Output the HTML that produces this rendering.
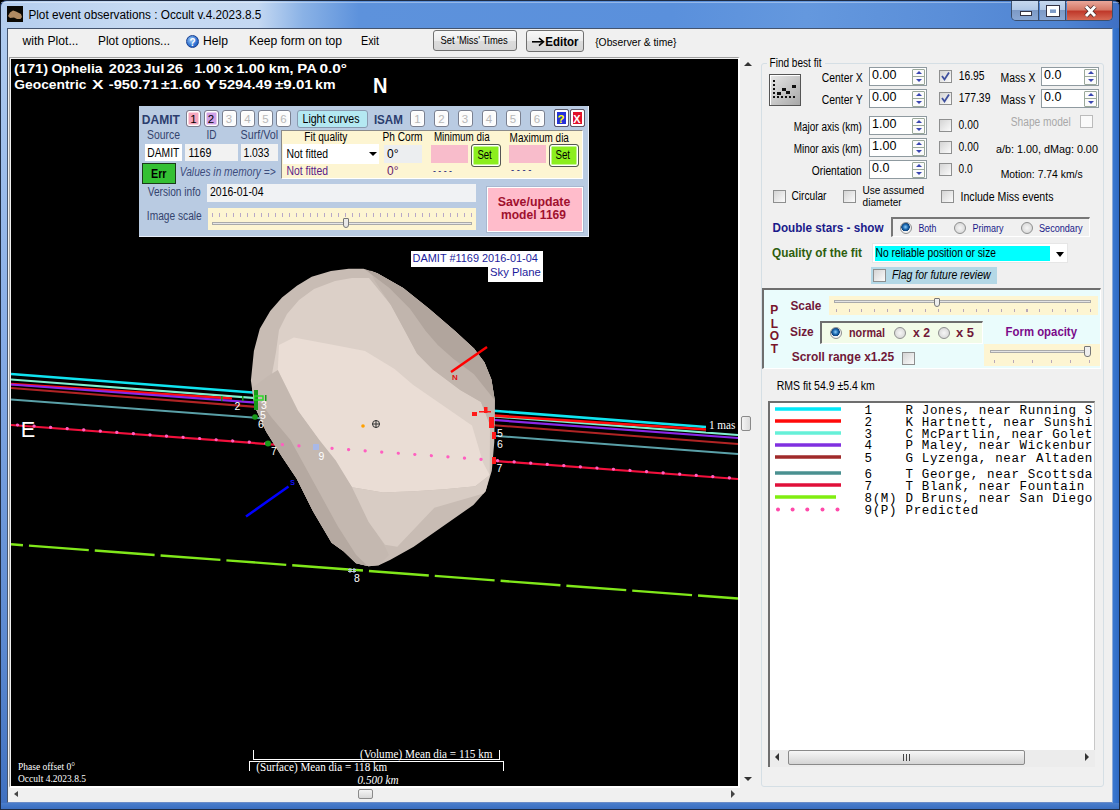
<!DOCTYPE html>
<html><head><meta charset="utf-8">
<style>
*{margin:0;padding:0;box-sizing:border-box}
html,body{width:1120px;height:810px;overflow:hidden;background:#000}
body{font-family:"Liberation Sans",sans-serif;font-size:12px;color:#000;position:relative}
.a{position:absolute;white-space:nowrap}
</style></head><body>
<div class="a" style="left:0;top:0;width:1120px;height:810px;border-radius:6px 6px 0 0;background:#3a68bc;border:1px solid #1e2c44"></div>
<div class="a" style="left:1px;top:1px;width:1118px;height:27px;border-radius:6px 6px 0 0;background:linear-gradient(90deg,#b4cdee 0%,#c6daf2 12%,#c4d8f2 23%,#8ab2e6 27%,#5d92dc 32%,#5a90dc 60%,#6498de 72%,#5a8ed8 85%,#4f84d2 95%,#3f70c4 100%)"></div>
<div class="a" style="left:1px;top:2px;width:1118px;height:1px;background:rgba(255,255,255,0.35)"></div>
<div class="a" style="left:1px;top:28px;width:6px;height:781px;background:linear-gradient(180deg,#b0ccf0,#86ace6 40%,#5a88d0 80%,#3f70c0 100%)"></div>
<div class="a" style="left:1113px;top:28px;width:6px;height:781px;background:linear-gradient(90deg,#3a78d0,#2f6ac4)"></div>
<div class="a" style="left:1px;top:803px;width:1118px;height:6px;background:linear-gradient(#4a7ecc,#3a6ec0)"></div>
<div class="a" style="left:7px;top:28px;width:1106px;height:775px;background:#f0f0f0;border:1px solid #44546e;border-right-color:#8aa8d8;border-bottom-color:#6a8cc8"></div>
<div class="a" style="left:7px;top:6px;width:16px;height:16px;background:#0a0804"><svg width="16" height="16" style="position:absolute;left:0;top:0"><path d="M1,10 L3,6.5 L6,4.5 L9,5.5 L11,6.5 L14,8 L15,11 L13.5,13 L10,13 L7,11.5 L3,12 Z" fill="#b08a62"/></svg></div>
<div class="a" style="left:1011px;top:1px;width:102px;height:20px;border:1px solid #3b4f6e;border-top:none;border-radius:0 0 5px 5px;overflow:hidden">
 <div style="position:absolute;left:0;top:0;width:27px;height:19px;background:linear-gradient(#c6d8ee,#b1c8e6 45%,#7d9ac6 50%,#8aa8d4);border-right:1px solid #3b4f6e"></div>
 <div style="position:absolute;left:28px;top:0;width:26px;height:19px;background:linear-gradient(#c6d8ee,#b1c8e6 45%,#7d9ac6 50%,#8aa8d4);border-right:1px solid #3b4f6e"></div>
 <div style="position:absolute;left:55px;top:0;width:47px;height:19px;background:linear-gradient(#e9a79a,#d67a68 45%,#c0392b 55%,#d66a55)"></div>
 <div style="position:absolute;left:8px;top:10px;width:12px;height:5px;background:#fff;border:1px solid #334"></div>
 <div style="position:absolute;left:35px;top:5px;width:12px;height:10px;border:3px solid #fff;box-shadow:0 0 0 1px #334"></div>
</div>
<svg class="a" style="left:1080px;top:2px" width="22" height="18"><g stroke-linecap="butt"><path d="M6,4.5 L15,14 M15,4.5 L6,14" stroke="#4a2a2a" stroke-width="4.6"/><path d="M6,4.5 L15,14 M15,4.5 L6,14" stroke="#fff" stroke-width="3"/></g></svg>
<div class="a" style="left:186px;top:35px;width:13px;height:13px;border-radius:50%;background:radial-gradient(circle at 40% 35%,#a8d0f8,#2b6fd0 60%,#1a4fa8);border:1px solid #1a4090"></div>
<div class="a" style="left:433px;top:30px;width:84px;height:21px;border:1px solid #707070;border-radius:3px;background:linear-gradient(#f8f8f8,#ececec 50%,#dcdcdc 51%,#d6d6d6)"></div>
<div class="a" style="left:526px;top:30px;width:58px;height:22px;border:1px solid #707070;border-radius:3px;background:linear-gradient(#f8f8f8,#ececec 50%,#dcdcdc 51%,#d6d6d6)"></div>
<svg class="a" style="left:530px;top:35px" width="16" height="14"><path d="M2,6.8 L13,6.8" stroke="#000" stroke-width="1.6"/><path d="M9,3 L13.5,6.8 L9,10.6" fill="none" stroke="#000" stroke-width="1.6"/></svg>
<div class="a" style="left:9px;top:57px;width:731px;height:731px;border-top:1px solid #a0a0a0;border-left:1px solid #a0a0a0;border-bottom:2px solid #fff;border-right:2px solid #fff"></div>
<div class="a" style="left:11px;top:59px;width:727px;height:727px;background:#000"></div>
<svg class="a" style="left:0;top:0" width="1120" height="810" viewBox="0 0 1120 810">
<defs><clipPath id="pc"><rect x="11" y="59" width="727" height="727"/></clipPath></defs>
<g clip-path="url(#pc)">
<g fill="none">
 <line x1="11" y1="374" x2="706" y2="427" stroke="#10e4f0" stroke-width="2.6"/>
 <line x1="11" y1="379.5" x2="738" y2="435" stroke="#80f0d0" stroke-width="2.2"/>
 <line x1="11" y1="384" x2="232" y2="398.5" stroke="#ff0c0c" stroke-width="2.6"/><line x1="491" y1="415.4" x2="706" y2="429.5" stroke="#ff0c0c" stroke-width="2.6"/>
 <line x1="11" y1="384.5" x2="738" y2="438" stroke="#8a28e8" stroke-width="2.2"/>
 <line x1="11" y1="388" x2="738" y2="444" stroke="#b02424" stroke-width="2"/>
 <line x1="11" y1="399.5" x2="738" y2="454" stroke="#5aa0a8" stroke-width="2"/>
 <line x1="11" y1="425" x2="738" y2="479" stroke="#f2103c" stroke-width="2.2"/>
 <line x1="11" y1="544.3" x2="353" y2="569.8" stroke="#80e81a" stroke-width="2.4" stroke-dasharray="60 6" stroke-dashoffset="48"/><line x1="353" y1="569.8" x2="738" y2="598.5" stroke="#80e81a" stroke-width="2.4" stroke-dasharray="60 6" stroke-dashoffset="50"/>
</g>
<g stroke="none">
 <path fill="#c8bcb4" d="M348.7,268.7 L363.5,268.7 L377.3,273.2 L403.2,288 L429.1,308.7 L455,331 L474,348.4 L484.4,362.2 L491.4,379.5 L494.8,400.3 L494.3,442 L491.8,470.8 L485.6,491.3 L473.4,505 L454.8,518 L413.7,546.8 L390,560 L378.8,565.3 L368.6,566.3 L356,563.2 L343.5,551.2 L331.6,542.7 L313,511.3 L296.6,478.5 L282.5,457.4 L266.1,431.6 L254.4,405.8 L250.9,380.5 L253.9,350.9 L259.8,328.7 L270.2,310.9 L282,297.6 L296.9,285.7 L311.7,276.8 L330.9,270.9 Z"/>
 <path fill="#dcd0c8" d="M276,352 L279,330 L287,314 L299,300 L314,289 L335,281 L352,278 L369,278 L391,305 L405,331 L417,353.6 L432.6,369.2 L460.2,389.9 L481,402 L490,425 L489.7,475 L475,486 L413,491 L352,487 L319,440 L298,411 L270,385 Z"/>
 <path fill="#c1b5ad" d="M370.4,270.6 L377.3,273.2 L403.2,288 L429.1,308.7 L455,331 L474,348.4 L484.4,362.2 L491.4,379.5 L494.8,400.3 L494.5,425 L490,425 L481,402 L460.2,389.9 L432.6,369.2 L417,353.6 L405,331 L391,305.2 L373.8,279.3 Z"/>
 <path fill="#b1a59d" d="M365,269.5 L377.3,273.2 L403.2,288 L429.1,308.7 L455,331 L474,348.4 L484.4,362.2 L491.4,379.5 L494.8,400.3 L474,374.3 L453.3,358.8 L437.8,345 L425.7,331 L410,308.7 L389.4,288 Z"/>
 <path fill="#eaddd5" d="M279,345 L293.9,337.6 L333.9,345 L365,350.9 L394.6,369 L413,384.8 L472,425.6 L483,462.6 L489.7,475 L475.3,486.2 L444.5,489.3 L413.7,491.3 L383,492.4 L352,487.2 L335.7,460.5 L319.3,440 L298,410.7 L277.8,370 Z"/>
 <path fill="#c4b8b0" d="M254.4,405.8 L266.1,431.6 L282.5,457.4 L296.6,478.5 L313,511.3 L331.6,542.7 L343.5,551.2 L356,563.2 L368.6,566.3 L378.8,565.3 L389,555 L385,546.8 L372.7,526 L352,487.2 L335.7,460.5 L319.3,440 L298,410.7 L277.8,370 L268,376 L252,388 Z"/>
 <path fill="#b5a9a1" d="M254.4,405.8 L266.1,431.6 L282.5,457.4 L296.6,478.5 L313,511.3 L331.6,542.7 L343.5,551.2 L356,563.2 L368.6,566.3 L366.5,565 L356.2,555 L337.8,526.2 L290.5,440 L272,418 L260,402 Z"/>
 <path fill="#d8ccc4" d="M352,487.2 L383,492.4 L413.7,491.3 L444.5,489.3 L475.3,486.2 L489.7,475 L485.6,491.3 L483.6,493.4 L434.3,507.8 L397.3,546.8 L385,544.7 L368.6,522 Z"/>
</g>
<line x1="11" y1="424.5" x2="738" y2="478.5" stroke="#ff5ec0" stroke-width="3.2" stroke-linecap="round" stroke-dasharray="0.1 16.5" stroke-dashoffset="-6.5"/>
</g>
<g>
 <rect x="254" y="390" width="4" height="20" fill="#1a9a1a"/>
 <rect x="254.5" y="396" width="8.5" height="4" fill="none" stroke="#22dd22" stroke-width="1.4"/>
 <circle cx="255" cy="417" r="2.8" fill="#1a9a1a"/>
 <rect x="242" y="396" width="1.5" height="5" fill="#1a9a1a"/><rect x="221" y="396" width="1.5" height="5" fill="#1a9a1a"/>
 <rect x="265" y="395" width="1.5" height="6" fill="#1a9a1a"/>
 <circle cx="268" cy="443.5" r="3" fill="#1a9a1a"/>
 <rect x="484" y="407" width="3.5" height="6" fill="#ff1a1a"/><rect x="479" y="411" width="12" height="1.5" fill="#ff1a1a"/>
 <rect x="472" y="412" width="5" height="4" fill="#ff1a1a"/>
 <rect x="489" y="417" width="5" height="11" fill="#ff1a1a"/>
 <rect x="492" y="432" width="4" height="7" fill="#ff1a1a"/>
 <rect x="492" y="457" width="4" height="7" fill="#ff1a1a"/>
 <line x1="246" y1="516.5" x2="288.5" y2="486.5" stroke="#0000ff" stroke-width="2.5"/>
 <line x1="451" y1="372" x2="487" y2="347" stroke="#ff0000" stroke-width="2.5"/>
 <rect x="313" y="444" width="6" height="6" fill="#a8b8e8"/>
 <circle cx="376" cy="424" r="3.5" fill="none" stroke="#333" stroke-width="1"/>
 <line x1="372" y1="424" x2="380" y2="424" stroke="#333"/><line x1="376" y1="420" x2="376" y2="428" stroke="#333"/>
 <circle cx="363" cy="426" r="1.8" fill="#ffa000"/>
 <rect x="706" y="417" width="32" height="15" fill="#000"/>
 <g stroke="#b8c8e0" stroke-width="1"><line x1="350" y1="568" x2="350" y2="573"/><line x1="354" y1="568" x2="354" y2="573"/><line x1="348" y1="569.5" x2="356" y2="569.5"/><line x1="348" y1="571.5" x2="356" y2="571.5"/></g>
</g>
<g stroke="#fff" stroke-width="1">
 <line x1="253" y1="759.5" x2="500" y2="759.5"/><line x1="253.5" y1="750" x2="253.5" y2="760"/><line x1="499.5" y1="750" x2="499.5" y2="760"/>
 <line x1="249" y1="761.5" x2="504" y2="761.5"/><line x1="249.5" y1="761" x2="249.5" y2="771"/><line x1="503.5" y1="761" x2="503.5" y2="771"/>
</g>
</svg>
<div class="a" style="left:411px;top:251px;width:132px;height:16px;background:#fff"></div>
<div class="a" style="left:488px;top:266px;width:55px;height:16px;background:#fff"></div>
<div class="a" style="left:744px;top:62px;width:0px;height:0px;border-left:4px solid transparent;border-right:4px solid transparent;border-bottom:4px solid #333"></div>
<div class="a" style="left:744px;top:777px;width:0px;height:0px;border-left:4px solid transparent;border-right:4px solid transparent;border-top:4px solid #333"></div>
<div class="a" style="left:741px;top:416px;width:10px;height:15px;border:1px solid #8a8a8a;border-radius:2px;background:linear-gradient(90deg,#f4f4f4,#dcdcdc)"></div>
<div class="a" style="left:14px;top:790.5px;width:0px;height:0px;border-top:3.5px solid transparent;border-bottom:3.5px solid transparent;border-right:4px solid #444"></div>
<div class="a" style="left:731px;top:790px;width:0px;height:0px;border-top:4px solid transparent;border-bottom:4px solid transparent;border-left:4px solid #444"></div>
<div class="a" style="left:358px;top:789px;width:15px;height:10px;border:1px solid #8a8a8a;border-radius:2px;background:linear-gradient(#f4f4f4,#d8d8d8)"></div>
<div class="a" style="left:139px;top:106px;width:450px;height:131px;background:#b9cbe2;border-right:1px solid #e8eef8;border-bottom:1px solid #e8eef8"></div>
<div class="a" style="left:186px;top:109.5px;width:15px;height:17.5px;background:#f6a6bc;border:1px solid #7a8090;border-radius:3px;box-shadow:inset 0 0 0 1.5px #fff"></div>
<div class="a" style="left:203.5px;top:109.5px;width:15px;height:17.5px;background:#d0a0e6;border:1px solid #7a8090;border-radius:3px;box-shadow:inset 0 0 0 1.5px #fff"></div>
<div class="a" style="left:221.5px;top:109.5px;width:15px;height:17.5px;background:#fbfbfb;border:1px solid #7a8090;border-radius:3px;box-shadow:inset 0 0 0 1.5px #fff"></div>
<div class="a" style="left:240px;top:109.5px;width:15px;height:17.5px;background:#fbfbfb;border:1px solid #7a8090;border-radius:3px;box-shadow:inset 0 0 0 1.5px #fff"></div>
<div class="a" style="left:258px;top:109.5px;width:15px;height:17.5px;background:#fbfbfb;border:1px solid #7a8090;border-radius:3px;box-shadow:inset 0 0 0 1.5px #fff"></div>
<div class="a" style="left:276px;top:109.5px;width:15px;height:17.5px;background:#fbfbfb;border:1px solid #7a8090;border-radius:3px;box-shadow:inset 0 0 0 1.5px #fff"></div>
<div class="a" style="left:297px;top:110px;width:71px;height:18px;background:#b4e8f2;border:1px solid #8a9ab0;border-radius:3px"></div>
<div class="a" style="left:410px;top:109.5px;width:15px;height:17.5px;background:#fbfbfb;border:1px solid #7a8090;border-radius:3px;box-shadow:inset 0 0 0 1.5px #fff"></div>
<div class="a" style="left:434px;top:109.5px;width:15px;height:17.5px;background:#fbfbfb;border:1px solid #7a8090;border-radius:3px;box-shadow:inset 0 0 0 1.5px #fff"></div>
<div class="a" style="left:457.5px;top:109.5px;width:15px;height:17.5px;background:#fbfbfb;border:1px solid #7a8090;border-radius:3px;box-shadow:inset 0 0 0 1.5px #fff"></div>
<div class="a" style="left:481.5px;top:109.5px;width:15px;height:17.5px;background:#fbfbfb;border:1px solid #7a8090;border-radius:3px;box-shadow:inset 0 0 0 1.5px #fff"></div>
<div class="a" style="left:505.5px;top:109.5px;width:15px;height:17.5px;background:#fbfbfb;border:1px solid #7a8090;border-radius:3px;box-shadow:inset 0 0 0 1.5px #fff"></div>
<div class="a" style="left:529.5px;top:109.5px;width:15px;height:17.5px;background:#fbfbfb;border:1px solid #7a8090;border-radius:3px;box-shadow:inset 0 0 0 1.5px #fff"></div>
<div class="a" style="left:553.5px;top:108.5px;width:15px;height:18px;background:#2632d8;border:1px solid #5a5a6a;border-radius:2px;box-shadow:inset 0 0 0 2px #fff"></div>
<div class="a" style="left:569.5px;top:108.5px;width:15px;height:18px;background:#e0102a;border:1px solid #5a5a6a;border-radius:2px;box-shadow:inset 0 0 0 2px #fff"></div>
<div class="a" style="left:145px;top:144px;width:37px;height:17px;background:#fff"></div>
<div class="a" style="left:185px;top:144px;width:53px;height:17px;background:#f2f2f2"></div>
<div class="a" style="left:241px;top:144px;width:37px;height:17px;background:#f2f2f2"></div>
<div class="a" style="left:142px;top:163px;width:34px;height:21px;background:#34c034;border:1px solid #1a3a1a"></div>
<div class="a" style="left:281px;top:130px;width:302px;height:49px;background:#fdf5d2;border-left:1px solid #8a8a8a;border-top:1px solid #8a8a8a;border-right:1px solid #fff;border-bottom:1px solid #fff"></div>
<div class="a" style="left:283px;top:144px;width:96px;height:20px;background:#fff"></div>
<div class="a" style="left:369px;top:152px;width:0px;height:0px;border-left:4px solid transparent;border-right:4px solid transparent;border-top:4px solid #000"></div>
<div class="a" style="left:384px;top:145px;width:38px;height:18px;background:#eceef0"></div>
<div class="a" style="left:431px;top:145px;width:37px;height:18px;background:#f8bccb"></div>
<div class="a" style="left:471px;top:144px;width:30px;height:23px;background:#8cee1e;border:1px solid #555;border-radius:3px;box-shadow:inset 0 0 0 1.5px #fff"></div>
<div class="a" style="left:509px;top:145px;width:37px;height:18px;background:#f8bccb"></div>
<div class="a" style="left:549px;top:144px;width:30px;height:23px;background:#8cee1e;border:1px solid #555;border-radius:3px;box-shadow:inset 0 0 0 1.5px #fff"></div>
<div class="a" style="left:207px;top:184px;width:269px;height:18px;background:#f0f2f4"></div>
<div class="a" style="left:208px;top:208px;width:268px;height:22px;background:#fdf5d2"><div class="a" style="left:4px;top:5px;width:260px;height:4px;background:repeating-linear-gradient(90deg,#b8a8c8 0 1px,transparent 1px 7px)"></div><div class="a" style="left:4px;top:14px;width:260px;height:3px;border:1px solid #aaa;background:#e6e6e6"></div><div class="a" style="left:135px;top:10px;width:6px;height:10px;background:#e8e8e8;border:1px solid #777;border-radius:1px 1px 3px 3px"></div></div>
<div class="a" style="left:487px;top:187px;width:96px;height:45px;background:#ffbccb;border:1px solid #fff;box-shadow:0 0 0 1px #a8b8d0"></div>
<div class="a" style="left:761px;top:63px;width:343px;height:724px;border:1px solid #d5dfe5;border-radius:3px"></div>
<div class="a" style="left:767px;top:60px;width:58px;height:8px;background:#f0f0f0"></div>
<div class="a" style="left:769px;top:74px;width:32px;height:32px;border:1px solid #555;background:linear-gradient(135deg,#e8e8e8,#a8a8a8);box-shadow:inset 1px 1px 0 #fff">
 <svg width="30" height="30" style="position:absolute;left:0;top:0"><g fill="#111"><rect x="3" y="5" width="2" height="2"/><rect x="3" y="9" width="2" height="2"/><rect x="3" y="13" width="2" height="2"/><rect x="3" y="17" width="2" height="2"/><rect x="3" y="21" width="2" height="2"/>
 <rect x="7" y="21" width="2" height="2"/><rect x="11" y="21" width="2" height="2"/><rect x="15" y="21" width="2" height="2"/><rect x="19" y="21" width="2" height="2"/><rect x="23" y="21" width="2" height="2"/>
 <rect x="7" y="17" width="4" height="3"/><rect x="12" y="13" width="4" height="3"/><rect x="16" y="16" width="4" height="3"/><rect x="22" y="10" width="4" height="3"/></g></svg>
</div>
<div class="a" style="left:869px;top:67px;width:58px;height:19px;background:#fff;border:1px solid #8f9aa0"><i style="position:absolute;left:42px;top:1px;width:13px;height:16px;border:1px solid #9aa89a;border-radius:1px;background:#fbfbfb"></i><i style="position:absolute;left:43px;top:8px;width:11px;height:1px;background:#9aa89a"></i><i style="position:absolute;left:45.5px;top:3px;border-left:3px solid transparent;border-right:3px solid transparent;border-bottom:3px solid #3a46b0"></i><i style="position:absolute;left:45.5px;top:11px;border-left:3px solid transparent;border-right:3px solid transparent;border-top:3px solid #3a46b0"></i></div>
<div class="a" style="left:869px;top:89px;width:58px;height:19px;background:#fff;border:1px solid #8f9aa0"><i style="position:absolute;left:42px;top:1px;width:13px;height:16px;border:1px solid #9aa89a;border-radius:1px;background:#fbfbfb"></i><i style="position:absolute;left:43px;top:8px;width:11px;height:1px;background:#9aa89a"></i><i style="position:absolute;left:45.5px;top:3px;border-left:3px solid transparent;border-right:3px solid transparent;border-bottom:3px solid #3a46b0"></i><i style="position:absolute;left:45.5px;top:11px;border-left:3px solid transparent;border-right:3px solid transparent;border-top:3px solid #3a46b0"></i></div>
<div class="a" style="left:869px;top:116px;width:58px;height:19px;background:#fff;border:1px solid #8f9aa0"><i style="position:absolute;left:42px;top:1px;width:13px;height:16px;border:1px solid #9aa89a;border-radius:1px;background:#fbfbfb"></i><i style="position:absolute;left:43px;top:8px;width:11px;height:1px;background:#9aa89a"></i><i style="position:absolute;left:45.5px;top:3px;border-left:3px solid transparent;border-right:3px solid transparent;border-bottom:3px solid #3a46b0"></i><i style="position:absolute;left:45.5px;top:11px;border-left:3px solid transparent;border-right:3px solid transparent;border-top:3px solid #3a46b0"></i></div>
<div class="a" style="left:869px;top:138px;width:58px;height:19px;background:#fff;border:1px solid #8f9aa0"><i style="position:absolute;left:42px;top:1px;width:13px;height:16px;border:1px solid #9aa89a;border-radius:1px;background:#fbfbfb"></i><i style="position:absolute;left:43px;top:8px;width:11px;height:1px;background:#9aa89a"></i><i style="position:absolute;left:45.5px;top:3px;border-left:3px solid transparent;border-right:3px solid transparent;border-bottom:3px solid #3a46b0"></i><i style="position:absolute;left:45.5px;top:11px;border-left:3px solid transparent;border-right:3px solid transparent;border-top:3px solid #3a46b0"></i></div>
<div class="a" style="left:869px;top:160px;width:58px;height:19px;background:#fff;border:1px solid #8f9aa0"><i style="position:absolute;left:42px;top:1px;width:13px;height:16px;border:1px solid #9aa89a;border-radius:1px;background:#fbfbfb"></i><i style="position:absolute;left:43px;top:8px;width:11px;height:1px;background:#9aa89a"></i><i style="position:absolute;left:45.5px;top:3px;border-left:3px solid transparent;border-right:3px solid transparent;border-bottom:3px solid #3a46b0"></i><i style="position:absolute;left:45.5px;top:11px;border-left:3px solid transparent;border-right:3px solid transparent;border-top:3px solid #3a46b0"></i></div>
<div class="a" style="left:939px;top:70px;width:13px;height:13px;border:1px solid #8e8f8f;background:linear-gradient(135deg,#d4d4d4,#fbfbfb);"><svg width="11" height="11" style="position:absolute;left:0;top:0"><path d="M2,5 L4.5,8.5 L9,1.5" fill="none" stroke="#3e4f9e" stroke-width="1.8"/></svg></div>
<div class="a" style="left:939px;top:92px;width:13px;height:13px;border:1px solid #8e8f8f;background:linear-gradient(135deg,#d4d4d4,#fbfbfb);"><svg width="11" height="11" style="position:absolute;left:0;top:0"><path d="M2,5 L4.5,8.5 L9,1.5" fill="none" stroke="#3e4f9e" stroke-width="1.8"/></svg></div>
<div class="a" style="left:939px;top:119px;width:13px;height:13px;border:1px solid #8e8f8f;background:linear-gradient(135deg,#d4d4d4,#fbfbfb);"></div>
<div class="a" style="left:939px;top:141px;width:13px;height:13px;border:1px solid #8e8f8f;background:linear-gradient(135deg,#d4d4d4,#fbfbfb);"></div>
<div class="a" style="left:939px;top:163px;width:13px;height:13px;border:1px solid #8e8f8f;background:linear-gradient(135deg,#d4d4d4,#fbfbfb);"></div>
<div class="a" style="left:1041px;top:67px;width:58px;height:19px;background:#fff;border:1px solid #8f9aa0"><i style="position:absolute;left:42px;top:1px;width:13px;height:16px;border:1px solid #9aa89a;border-radius:1px;background:#fbfbfb"></i><i style="position:absolute;left:43px;top:8px;width:11px;height:1px;background:#9aa89a"></i><i style="position:absolute;left:45.5px;top:3px;border-left:3px solid transparent;border-right:3px solid transparent;border-bottom:3px solid #3a46b0"></i><i style="position:absolute;left:45.5px;top:11px;border-left:3px solid transparent;border-right:3px solid transparent;border-top:3px solid #3a46b0"></i></div>
<div class="a" style="left:1041px;top:89px;width:58px;height:19px;background:#fff;border:1px solid #8f9aa0"><i style="position:absolute;left:42px;top:1px;width:13px;height:16px;border:1px solid #9aa89a;border-radius:1px;background:#fbfbfb"></i><i style="position:absolute;left:43px;top:8px;width:11px;height:1px;background:#9aa89a"></i><i style="position:absolute;left:45.5px;top:3px;border-left:3px solid transparent;border-right:3px solid transparent;border-bottom:3px solid #3a46b0"></i><i style="position:absolute;left:45.5px;top:11px;border-left:3px solid transparent;border-right:3px solid transparent;border-top:3px solid #3a46b0"></i></div>
<div class="a" style="left:1080px;top:115px;width:13px;height:13px;border:1px solid #8e8f8f;background:linear-gradient(135deg,#d4d4d4,#fbfbfb);background:#fafafa;border-color:#bbb"></div>
<div class="a" style="left:773px;top:190px;width:13px;height:13px;border:1px solid #8e8f8f;background:linear-gradient(135deg,#d4d4d4,#fbfbfb);"></div>
<div class="a" style="left:843px;top:190px;width:13px;height:13px;border:1px solid #8e8f8f;background:linear-gradient(135deg,#d4d4d4,#fbfbfb);"></div>
<div class="a" style="left:941px;top:190px;width:13px;height:13px;border:1px solid #8e8f8f;background:linear-gradient(135deg,#d4d4d4,#fbfbfb);"></div>
<div class="a" style="left:891px;top:217px;width:199px;height:20px;border-left:2px solid #777;border-top:2px solid #777;border-right:1px solid #fff;border-bottom:1px solid #fff"></div>
<div class="a" style="left:899.5px;top:221.5px;width:12px;height:12px;border-radius:50%;border:1px solid #8e8f8f;background:radial-gradient(circle at 45% 40%,#8fd0ff 0,#1e6ab0 2.5px,#0b3f7a 4px,#f2f2f2 4.5px)"></div>
<div class="a" style="left:953.7px;top:222px;width:12px;height:12px;border-radius:50%;border:1px solid #8e8f8f;background:radial-gradient(#f6f6f6,#d0d0d0)"></div>
<div class="a" style="left:1021px;top:222px;width:12px;height:12px;border-radius:50%;border:1px solid #8e8f8f;background:radial-gradient(#f6f6f6,#d0d0d0)"></div>
<div class="a" style="left:872px;top:243px;width:196px;height:20px;background:#fff;border:1px solid #e6e6e6"><div style="position:absolute;left:2px;top:2px;width:175px;height:15px;background:#00ffff"></div><span style="position:absolute;right:3px;top:8px;border-left:4px solid transparent;border-right:4px solid transparent;border-top:5px solid #000"></span></div>
<div class="a" style="left:871px;top:267px;width:126px;height:17px;background:#b4d8e6"></div>
<div class="a" style="left:873px;top:269px;width:13px;height:13px;border:1px solid #8e8f8f;background:linear-gradient(135deg,#d4d4d4,#fbfbfb);"></div>
<div class="a" style="left:762px;top:288px;width:339px;height:81px;background:#eafcfc;border-left:2px solid #6e6e6e;border-top:2px solid #6e6e6e;border-right:1px solid #fff;border-bottom:1px solid #fff"></div>
<div class="a" style="left:829px;top:296px;width:269px;height:19px;background:#fdf5d2"><div class="a" style="left:5px;top:4px;width:257px;height:3px;border:1px solid #aaa;background:#e4e4e4"></div><div class="a" style="left:105px;top:2px;width:6px;height:9px;background:#eee;border:1px solid #777;border-radius:1px 1px 3px 3px"></div><div class="a" style="left:7px;top:13px;width:256px;height:3px;background:repeating-linear-gradient(90deg,#b8a8b8 0 1px,transparent 1px 12.7px)"></div></div>
<div class="a" style="left:820px;top:321px;width:163px;height:23px;background:#f2fbe8;border-left:2px solid #6e6e6e;border-top:2px solid #6e6e6e;border-right:1px solid #fff;border-bottom:1px solid #fff"></div>
<div class="a" style="left:830.2px;top:327px;width:12px;height:12px;border-radius:50%;border:1px solid #8e8f8f;background:radial-gradient(circle at 45% 40%,#8fd0ff 0,#1e6ab0 2.5px,#0b3f7a 4px,#f2f2f2 4.5px)"></div>
<div class="a" style="left:893.7px;top:327px;width:12px;height:12px;border-radius:50%;border:1px solid #8e8f8f;background:radial-gradient(#f6f6f6,#d0d0d0)"></div>
<div class="a" style="left:938px;top:327px;width:12px;height:12px;border-radius:50%;border:1px solid #8e8f8f;background:radial-gradient(#f6f6f6,#d0d0d0)"></div>
<div class="a" style="left:902px;top:352px;width:13px;height:13px;border:1px solid #8e8f8f;background:linear-gradient(135deg,#d4d4d4,#fbfbfb);"></div>
<div class="a" style="left:984px;top:344px;width:116px;height:22px;background:#fdf5d2"><div class="a" style="left:6px;top:6px;width:100px;height:3px;border:1px solid #aaa;background:#e4e4e4"></div><div class="a" style="left:100px;top:2px;width:7px;height:11px;background:#eee;border:1px solid #777;border-radius:1px 1px 3px 3px"></div><div class="a" style="left:10px;top:16px;width:100px;height:3px;background:repeating-linear-gradient(90deg,#b8a8b8 0 1px,transparent 1px 19px)"></div></div>
<div class="a" style="left:768px;top:401px;width:327px;height:366px;background:#fff;border-left:2px solid #6e6e6e;border-top:2px solid #6e6e6e;border-right:1px solid #c8c8c8"></div>
<svg class="a" style="left:768px;top:401px" width="80" height="120"><g stroke-width="3.5" fill="none">
  <line x1="7" y1="8" x2="73" y2="8" stroke="#00e8f8"/>
  <line x1="7" y1="20" x2="73" y2="20" stroke="#ff0a0a"/>
  <line x1="7" y1="32" x2="73" y2="32" stroke="#66f0d8"/>
  <line x1="7" y1="44" x2="73" y2="44" stroke="#8030e0"/>
  <line x1="7" y1="56" x2="73" y2="56" stroke="#a02a2a"/>
  <line x1="7" y1="72" x2="73" y2="72" stroke="#4a9090"/>
  <line x1="7" y1="84" x2="73" y2="84" stroke="#e0103a"/>
  <line x1="7" y1="96" x2="68" y2="96" stroke="#80ee10"/>
 </g><g fill="#ff4aaa"><circle cx="10" cy="108.5" r="2"/><circle cx="24.6" cy="108.5" r="2"/><circle cx="39.3" cy="108.5" r="2"/><circle cx="54.5" cy="108.5" r="2"/><circle cx="69.5" cy="108.5" r="2"/></g></svg>
<svg class="a" style="left:0;top:0" width="1093" height="760" viewBox="0 0 1093 760"><text x="864.5" y="413.5" font-family="Liberation Mono" font-size="12.5" letter-spacing="0.65" xml:space="preserve">1</text><text x="905.5" y="413.5" font-family="Liberation Mono" font-size="12.5" letter-spacing="0.65" xml:space="preserve">R Jones, near Running Springs</text><text x="864.5" y="425.5" font-family="Liberation Mono" font-size="12.5" letter-spacing="0.65" xml:space="preserve">2</text><text x="905.5" y="425.5" font-family="Liberation Mono" font-size="12.5" letter-spacing="0.65" xml:space="preserve">K Hartnett, near Sunshine</text><text x="864.5" y="437.5" font-family="Liberation Mono" font-size="12.5" letter-spacing="0.65" xml:space="preserve">3</text><text x="905.5" y="437.5" font-family="Liberation Mono" font-size="12.5" letter-spacing="0.65" xml:space="preserve">C McPartlin, near Goleta</text><text x="864.5" y="449.4" font-family="Liberation Mono" font-size="12.5" letter-spacing="0.65" xml:space="preserve">4</text><text x="905.5" y="449.4" font-family="Liberation Mono" font-size="12.5" letter-spacing="0.65" xml:space="preserve">P Maley, near Wickenburg</text><text x="864.5" y="461.7" font-family="Liberation Mono" font-size="12.5" letter-spacing="0.65" xml:space="preserve">5</text><text x="905.5" y="461.7" font-family="Liberation Mono" font-size="12.5" letter-spacing="0.65" xml:space="preserve">G Lyzenga, near Altadena</text><text x="864.5" y="477.8" font-family="Liberation Mono" font-size="12.5" letter-spacing="0.65" xml:space="preserve">6</text><text x="905.5" y="477.8" font-family="Liberation Mono" font-size="12.5" letter-spacing="0.65" xml:space="preserve">T George, near Scottsdale</text><text x="864.5" y="489.9" font-family="Liberation Mono" font-size="12.5" letter-spacing="0.65" xml:space="preserve">7</text><text x="905.5" y="489.9" font-family="Liberation Mono" font-size="12.5" letter-spacing="0.65" xml:space="preserve">T Blank, near Fountain Hills</text><text x="864.5" y="501.9" font-family="Liberation Mono" font-size="12.5" letter-spacing="0.65" xml:space="preserve">8(M)</text><text x="905.5" y="501.9" font-family="Liberation Mono" font-size="12.5" letter-spacing="0.65" xml:space="preserve">D Bruns, near San Diego</text><text x="864.5" y="514" font-family="Liberation Mono" font-size="12.5" letter-spacing="0.65" xml:space="preserve">9(P)</text><text x="905.5" y="514" font-family="Liberation Mono" font-size="12.5" letter-spacing="0.65" xml:space="preserve">Predicted</text></svg>
<div class="a" style="left:770px;top:750px;width:325px;height:17px;background:#ececec"></div>
<div class="a" style="left:775px;top:753px;width:0px;height:0px;border-top:4px solid transparent;border-bottom:4px solid transparent;border-right:4px solid #333"></div>
<div class="a" style="left:1085px;top:753px;width:0px;height:0px;border-top:4px solid transparent;border-bottom:4px solid transparent;border-left:4px solid #333"></div>
<div class="a" style="left:788px;top:750px;width:237px;height:15px;border:1px solid #8a8a8a;border-radius:2px;background:linear-gradient(#f6f6f6,#e6e6e6 50%,#d4d4d4)"><div style="position:absolute;left:114px;top:3px;width:7px;height:7px;background:repeating-linear-gradient(90deg,#444 0 1px,transparent 1px 3px)"></div></div>
<svg class="a" style="left:0;top:0" width="1120" height="810" viewBox="0 0 1120 810">
<text x="28.4" y="18.6" font-family="Liberation Sans" font-size="12" fill="#000" textLength="233" lengthAdjust="spacingAndGlyphs">Plot event observations : Occult v.4.2023.8.5</text>
<text x="22.5" y="45" font-family="Liberation Sans" font-size="12" fill="#000" textLength="56" lengthAdjust="spacingAndGlyphs">with Plot...</text>
<text x="98" y="45" font-family="Liberation Sans" font-size="12" fill="#000" textLength="72" lengthAdjust="spacingAndGlyphs">Plot options...</text>
<text x="192.5" y="45.5" font-family="Liberation Sans" font-size="10" fill="#fff" font-weight="bold" text-anchor="middle">?</text>
<text x="203" y="45" font-family="Liberation Sans" font-size="12" fill="#000" textLength="25" lengthAdjust="spacingAndGlyphs">Help</text>
<text x="249" y="45" font-family="Liberation Sans" font-size="12" fill="#000" textLength="93" lengthAdjust="spacingAndGlyphs">Keep form on top</text>
<text x="361" y="45" font-family="Liberation Sans" font-size="12" fill="#000" textLength="18" lengthAdjust="spacingAndGlyphs">Exit</text>
<text x="440.4" y="44.1" font-family="Liberation Sans" font-size="10.5" fill="#000" textLength="67.3" lengthAdjust="spacingAndGlyphs">Set &#x27;Miss&#x27; Times</text>
<text x="545.3" y="46.4" font-family="Liberation Sans" font-size="13.5" fill="#000" font-weight="bold" textLength="33.2" lengthAdjust="spacingAndGlyphs">Editor</text>
<text x="595.2" y="46.4" font-family="Liberation Sans" font-size="10.5" fill="#000" textLength="81.2" lengthAdjust="spacingAndGlyphs">{Observer &amp; time}</text>
<text x="13.9" y="72.8" font-family="Liberation Sans" font-size="13.2" fill="#fff" font-weight="bold" textLength="34.2" lengthAdjust="spacingAndGlyphs">(171)</text>
<text x="51.4" y="72.8" font-family="Liberation Sans" font-size="13.2" fill="#fff" font-weight="bold" textLength="51.2" lengthAdjust="spacingAndGlyphs">Ophelia</text>
<text x="108.80000000000001" y="72.8" font-family="Liberation Sans" font-size="13.2" fill="#fff" font-weight="bold" textLength="32.4" lengthAdjust="spacingAndGlyphs">2023</text>
<text x="143.6" y="72.8" font-family="Liberation Sans" font-size="13.2" fill="#fff" font-weight="bold" textLength="20.8" lengthAdjust="spacingAndGlyphs">Jul</text>
<text x="166.4" y="72.8" font-family="Liberation Sans" font-size="13.2" fill="#fff" font-weight="bold" textLength="16.8" lengthAdjust="spacingAndGlyphs">26</text>
<text x="194.4" y="72.8" font-family="Liberation Sans" font-size="13.2" fill="#fff" font-weight="bold" textLength="26.9" lengthAdjust="spacingAndGlyphs">1.00</text>
<text x="223.70000000000002" y="72.8" font-family="Liberation Sans" font-size="13.2" fill="#fff" font-weight="bold" textLength="9.8" lengthAdjust="spacingAndGlyphs">x</text>
<text x="236.5" y="72.8" font-family="Liberation Sans" font-size="13.2" fill="#fff" font-weight="bold" textLength="28.4" lengthAdjust="spacingAndGlyphs">1.00</text>
<text x="268.7" y="72.8" font-family="Liberation Sans" font-size="13.2" fill="#fff" font-weight="bold" textLength="24.8" lengthAdjust="spacingAndGlyphs">km,</text>
<text x="297.29999999999995" y="72.8" font-family="Liberation Sans" font-size="13.2" fill="#fff" font-weight="bold" textLength="19.7" lengthAdjust="spacingAndGlyphs">PA</text>
<text x="319.4" y="72.8" font-family="Liberation Sans" font-size="13.2" fill="#fff" font-weight="bold" textLength="27.6" lengthAdjust="spacingAndGlyphs">0.0°</text>
<text x="14.3" y="88.5" font-family="Liberation Sans" font-size="13.2" fill="#fff" font-weight="bold" textLength="72.2" lengthAdjust="spacingAndGlyphs">Geocentric</text>
<text x="92.0" y="88.5" font-family="Liberation Sans" font-size="13.2" fill="#fff" font-weight="bold" textLength="11.5" lengthAdjust="spacingAndGlyphs">X</text>
<text x="108.80000000000001" y="88.5" font-family="Liberation Sans" font-size="13.2" fill="#fff" font-weight="bold" textLength="49.8" lengthAdjust="spacingAndGlyphs">-950.71</text>
<text x="161.0" y="88.5" font-family="Liberation Sans" font-size="13.2" fill="#fff" font-weight="bold" textLength="39.6" lengthAdjust="spacingAndGlyphs">±1.60</text>
<text x="205.1" y="88.5" font-family="Liberation Sans" font-size="13.2" fill="#fff" font-weight="bold" textLength="12.6" lengthAdjust="spacingAndGlyphs">Y</text>
<text x="218.70000000000002" y="88.5" font-family="Liberation Sans" font-size="13.2" fill="#fff" font-weight="bold" textLength="53.3" lengthAdjust="spacingAndGlyphs">5294.49</text>
<text x="275.09999999999997" y="88.5" font-family="Liberation Sans" font-size="13.2" fill="#fff" font-weight="bold" textLength="37.6" lengthAdjust="spacingAndGlyphs">±9.01</text>
<text x="315.09999999999997" y="88.5" font-family="Liberation Sans" font-size="13.2" fill="#fff" font-weight="bold" textLength="20.5" lengthAdjust="spacingAndGlyphs">km</text>
<text x="373" y="92.9" font-family="Liberation Sans" font-size="22" fill="#fff" font-weight="bold" textLength="14.5" lengthAdjust="spacingAndGlyphs">N</text>
<text x="20.7" y="437.2" font-family="Liberation Sans" font-size="22.8" fill="#fff" textLength="14.5" lengthAdjust="spacingAndGlyphs">E</text>
<text x="234.5" y="410" font-family="Liberation Sans" font-size="10.5" fill="#fff">2</text>
<text x="261" y="409" font-family="Liberation Sans" font-size="10.5" fill="#fff">3</text>
<text x="260" y="419" font-family="Liberation Sans" font-size="10.5" fill="#fff">5</text>
<text x="258" y="428" font-family="Liberation Sans" font-size="10.5" fill="#fff">6</text>
<text x="271" y="455" font-family="Liberation Sans" font-size="10.5" fill="#fff">7</text>
<text x="318.5" y="460" font-family="Liberation Sans" font-size="10.5" fill="#fff">9</text>
<text x="354" y="582" font-family="Liberation Sans" font-size="10.5" fill="#fff">8</text>
<text x="497" y="437" font-family="Liberation Sans" font-size="10.5" fill="#fff">5</text>
<text x="497" y="447.5" font-family="Liberation Sans" font-size="10.5" fill="#fff">6</text>
<text x="496.5" y="472" font-family="Liberation Sans" font-size="10.5" fill="#fff">7</text>
<text x="452" y="380" font-family="Liberation Sans" font-size="8" fill="#e01010" font-weight="bold">N</text>
<text x="290.3" y="484.8" font-family="Liberation Sans" font-size="7" fill="#1010ff" font-weight="bold">S</text>
<text x="708.9" y="428.9" font-family="Liberation Serif" font-size="13" fill="#fff" textLength="26.5" lengthAdjust="spacingAndGlyphs">1 mas</text>
<text x="360" y="758.2" font-family="Liberation Serif" font-size="12" fill="#fff" textLength="132.5" lengthAdjust="spacingAndGlyphs">(Volume) Mean dia = 115 km</text>
<text x="256.25" y="771" font-family="Liberation Serif" font-size="12" fill="#fff" textLength="131" lengthAdjust="spacingAndGlyphs">(Surface) Mean dia = 118 km</text>
<text x="357.5" y="783.75" font-family="Liberation Serif" font-size="12" fill="#fff" font-style="italic" textLength="41" lengthAdjust="spacingAndGlyphs">0.500 km</text>
<text x="18" y="769.9" font-family="Liberation Serif" font-size="9.5" fill="#fff" textLength="57" lengthAdjust="spacingAndGlyphs">Phase offset 0°</text>
<text x="18" y="781.6" font-family="Liberation Serif" font-size="9.5" fill="#fff" textLength="68" lengthAdjust="spacingAndGlyphs">Occult 4.2023.8.5</text>
<text x="412.6" y="262" font-family="Liberation Sans" font-size="11.5" fill="#1c1c9c" textLength="125.3" lengthAdjust="spacingAndGlyphs">DAMIT #1169 2016-01-04</text>
<text x="490" y="276.4" font-family="Liberation Sans" font-size="11.5" fill="#1c1c9c" textLength="50.7" lengthAdjust="spacingAndGlyphs">Sky Plane</text>
<text x="141.8" y="123.6" font-family="Liberation Sans" font-size="12" fill="#2b3d6e" font-weight="bold" textLength="38" lengthAdjust="spacingAndGlyphs">DAMIT</text>
<text x="193.5" y="122.5" font-family="Liberation Sans" font-size="11.5" fill="#000" text-anchor="middle">1</text>
<text x="211.0" y="122.5" font-family="Liberation Sans" font-size="11.5" fill="#000" text-anchor="middle">2</text>
<text x="229.0" y="122.5" font-family="Liberation Sans" font-size="11.5" fill="#b8b8b8" text-anchor="middle">3</text>
<text x="247.5" y="122.5" font-family="Liberation Sans" font-size="11.5" fill="#b8b8b8" text-anchor="middle">4</text>
<text x="265.5" y="122.5" font-family="Liberation Sans" font-size="11.5" fill="#b8b8b8" text-anchor="middle">5</text>
<text x="283.5" y="122.5" font-family="Liberation Sans" font-size="11.5" fill="#b8b8b8" text-anchor="middle">6</text>
<text x="302.5" y="122.5" font-family="Liberation Sans" font-size="12" fill="#000" textLength="57" lengthAdjust="spacingAndGlyphs">Light curves</text>
<text x="373.9" y="123.6" font-family="Liberation Sans" font-size="12" fill="#2b3d6e" font-weight="bold" textLength="29" lengthAdjust="spacingAndGlyphs">ISAM</text>
<text x="417.5" y="122.5" font-family="Liberation Sans" font-size="11.5" fill="#b8b8b8" text-anchor="middle">1</text>
<text x="441.5" y="122.5" font-family="Liberation Sans" font-size="11.5" fill="#b8b8b8" text-anchor="middle">2</text>
<text x="465.0" y="122.5" font-family="Liberation Sans" font-size="11.5" fill="#b8b8b8" text-anchor="middle">3</text>
<text x="489.0" y="122.5" font-family="Liberation Sans" font-size="11.5" fill="#b8b8b8" text-anchor="middle">4</text>
<text x="513.0" y="122.5" font-family="Liberation Sans" font-size="11.5" fill="#b8b8b8" text-anchor="middle">5</text>
<text x="537.0" y="122.5" font-family="Liberation Sans" font-size="11.5" fill="#b8b8b8" text-anchor="middle">6</text>
<text x="561" y="122.5" font-family="Liberation Sans" font-size="11.5" fill="#ffff00" font-weight="bold" text-anchor="middle">?</text>
<text x="577" y="122.5" font-family="Liberation Sans" font-size="11" fill="#fff" font-weight="bold" text-anchor="middle">X</text>
<text x="147.1" y="139.1" font-family="Liberation Sans" font-size="12" fill="#34446e" textLength="33" lengthAdjust="spacingAndGlyphs">Source</text>
<text x="206.6" y="139.1" font-family="Liberation Sans" font-size="12" fill="#34446e" textLength="10" lengthAdjust="spacingAndGlyphs">ID</text>
<text x="240.6" y="139.1" font-family="Liberation Sans" font-size="12" fill="#34446e" textLength="37.5" lengthAdjust="spacingAndGlyphs">Surf/Vol</text>
<text x="147.3" y="156.7" font-family="Liberation Sans" font-size="12" fill="#000" textLength="32" lengthAdjust="spacingAndGlyphs">DAMIT</text>
<text x="188.5" y="156.7" font-family="Liberation Sans" font-size="12" fill="#000" textLength="22.8" lengthAdjust="spacingAndGlyphs">1169</text>
<text x="243.4" y="156.7" font-family="Liberation Sans" font-size="12" fill="#000" textLength="26" lengthAdjust="spacingAndGlyphs">1.033</text>
<text x="151" y="177.5" font-family="Liberation Sans" font-size="12" fill="#000" font-weight="bold" textLength="15.5" lengthAdjust="spacingAndGlyphs">Err</text>
<text x="179.8" y="175.5" font-family="Liberation Sans" font-size="12" fill="#3c4c7c" font-style="italic" textLength="95.8" lengthAdjust="spacingAndGlyphs">Values in memory =&gt;</text>
<text x="304.3" y="140.6" font-family="Liberation Sans" font-size="12" fill="#000" textLength="43" lengthAdjust="spacingAndGlyphs">Fit quality</text>
<text x="382.5" y="140.6" font-family="Liberation Sans" font-size="12" fill="#000" textLength="40" lengthAdjust="spacingAndGlyphs">Ph Corm</text>
<text x="433.9" y="141" font-family="Liberation Sans" font-size="12" fill="#000" textLength="55.7" lengthAdjust="spacingAndGlyphs">Minimum dia</text>
<text x="509.6" y="142.1" font-family="Liberation Sans" font-size="12" fill="#000" textLength="59.3" lengthAdjust="spacingAndGlyphs">Maximum dia</text>
<text x="286.4" y="158" font-family="Liberation Sans" font-size="12" fill="#000" textLength="41.7" lengthAdjust="spacingAndGlyphs">Not fitted</text>
<text x="387" y="158" font-family="Liberation Sans" font-size="12" fill="#000">0°</text>
<text x="477.4" y="159.3" font-family="Liberation Sans" font-size="12" fill="#000" textLength="14.4" lengthAdjust="spacingAndGlyphs">Set</text>
<text x="555.4" y="159.3" font-family="Liberation Sans" font-size="12" fill="#000" textLength="14.6" lengthAdjust="spacingAndGlyphs">Set</text>
<text x="286.4" y="175.4" font-family="Liberation Sans" font-size="12" fill="#5a1a88" textLength="41.7" lengthAdjust="spacingAndGlyphs">Not fitted</text>
<text x="387" y="175.4" font-family="Liberation Sans" font-size="12" fill="#6a1a6a">0°</text>
<text x="433" y="173.5" font-family="Liberation Sans" font-size="11" fill="#2a2a7a" textLength="19" lengthAdjust="spacingAndGlyphs">- - - -</text>
<text x="511" y="173.2" font-family="Liberation Sans" font-size="11" fill="#2a2a7a" textLength="20.4" lengthAdjust="spacingAndGlyphs">- - - -</text>
<text x="147.7" y="195.6" font-family="Liberation Sans" font-size="12" fill="#34446e" textLength="53" lengthAdjust="spacingAndGlyphs">Version info</text>
<text x="210" y="196.2" font-family="Liberation Sans" font-size="12" fill="#000" textLength="53.5" lengthAdjust="spacingAndGlyphs">2016-01-04</text>
<text x="146.8" y="220.3" font-family="Liberation Sans" font-size="12" fill="#34446e" textLength="55" lengthAdjust="spacingAndGlyphs">Image scale</text>
<text x="497.7" y="206.3" font-family="Liberation Sans" font-size="12.5" fill="#a0102e" font-weight="bold" textLength="72.6" lengthAdjust="spacingAndGlyphs">Save/update</text>
<text x="501" y="219.3" font-family="Liberation Sans" font-size="12.5" fill="#a0102e" font-weight="bold" textLength="65" lengthAdjust="spacingAndGlyphs">model 1169</text>
<text x="769.5" y="66.6" font-family="Liberation Sans" font-size="12" fill="#000" textLength="52" lengthAdjust="spacingAndGlyphs">Find best fit</text>
<text x="821.7" y="81.5" font-family="Liberation Sans" font-size="12" fill="#000" textLength="41" lengthAdjust="spacingAndGlyphs">Center X</text>
<text x="821.7" y="103.5" font-family="Liberation Sans" font-size="12" fill="#000" textLength="41" lengthAdjust="spacingAndGlyphs">Center Y</text>
<text x="793.8" y="130.6" font-family="Liberation Sans" font-size="12" fill="#000" textLength="68" lengthAdjust="spacingAndGlyphs">Major axis (km)</text>
<text x="793.8" y="152.6" font-family="Liberation Sans" font-size="12" fill="#000" textLength="68" lengthAdjust="spacingAndGlyphs">Minor axis (km)</text>
<text x="811.8" y="174.6" font-family="Liberation Sans" font-size="12" fill="#000" textLength="50" lengthAdjust="spacingAndGlyphs">Orientation</text>
<text x="872" y="79" font-family="Liberation Sans" font-size="12.5" fill="#000">0.00</text>
<text x="872" y="101" font-family="Liberation Sans" font-size="12.5" fill="#000">0.00</text>
<text x="872" y="128" font-family="Liberation Sans" font-size="12.5" fill="#000">1.00</text>
<text x="872" y="150" font-family="Liberation Sans" font-size="12.5" fill="#000">1.00</text>
<text x="872" y="172" font-family="Liberation Sans" font-size="12.5" fill="#000">0.0</text>
<text x="958.7" y="80.4" font-family="Liberation Sans" font-size="12" fill="#000" textLength="25.8" lengthAdjust="spacingAndGlyphs">16.95</text>
<text x="958.7" y="102.4" font-family="Liberation Sans" font-size="12" fill="#000" textLength="31.7" lengthAdjust="spacingAndGlyphs">177.39</text>
<text x="958.6" y="129.3" font-family="Liberation Sans" font-size="12" fill="#000" textLength="20" lengthAdjust="spacingAndGlyphs">0.00</text>
<text x="958.6" y="151.3" font-family="Liberation Sans" font-size="12" fill="#000" textLength="20" lengthAdjust="spacingAndGlyphs">0.00</text>
<text x="958.6" y="173.3" font-family="Liberation Sans" font-size="12" fill="#000" textLength="14" lengthAdjust="spacingAndGlyphs">0.0</text>
<text x="1000.6" y="82" font-family="Liberation Sans" font-size="12" fill="#000" textLength="34.8" lengthAdjust="spacingAndGlyphs">Mass X</text>
<text x="1000.6" y="104" font-family="Liberation Sans" font-size="12" fill="#000" textLength="34.8" lengthAdjust="spacingAndGlyphs">Mass Y</text>
<text x="1044" y="79" font-family="Liberation Sans" font-size="12.5" fill="#000">0.0</text>
<text x="1044" y="101" font-family="Liberation Sans" font-size="12.5" fill="#000">0.0</text>
<text x="1010.8" y="126" font-family="Liberation Sans" font-size="12" fill="#a8a8a8" textLength="60" lengthAdjust="spacingAndGlyphs">Shape model</text>
<text x="995.9" y="152.6" font-family="Liberation Sans" font-size="11.5" fill="#000" textLength="102" lengthAdjust="spacingAndGlyphs">a/b: 1.00, dMag: 0.00</text>
<text x="1000.7" y="177.5" font-family="Liberation Sans" font-size="11.5" fill="#000" textLength="82" lengthAdjust="spacingAndGlyphs">Motion: 7.74 km/s</text>
<text x="791.5" y="200.4" font-family="Liberation Sans" font-size="12" fill="#000" textLength="35" lengthAdjust="spacingAndGlyphs">Circular</text>
<text x="862.4" y="193.6" font-family="Liberation Sans" font-size="11.5" fill="#000" textLength="61.6" lengthAdjust="spacingAndGlyphs">Use assumed</text>
<text x="862.6" y="206" font-family="Liberation Sans" font-size="11.5" fill="#000" textLength="39" lengthAdjust="spacingAndGlyphs">diameter</text>
<text x="960.5" y="200.8" font-family="Liberation Sans" font-size="12" fill="#000" textLength="93" lengthAdjust="spacingAndGlyphs">Include Miss events</text>
<text x="772.5" y="231.5" font-family="Liberation Sans" font-size="12" fill="#1a1a8a" font-weight="bold" textLength="111" lengthAdjust="spacingAndGlyphs">Double stars - show</text>
<text x="918.4" y="232" font-family="Liberation Sans" font-size="10" fill="#1a1a8a" textLength="18" lengthAdjust="spacingAndGlyphs">Both</text>
<text x="972.5" y="232" font-family="Liberation Sans" font-size="10" fill="#1a1a8a" textLength="31" lengthAdjust="spacingAndGlyphs">Primary</text>
<text x="1039" y="232" font-family="Liberation Sans" font-size="10" fill="#1a1a8a" textLength="43.5" lengthAdjust="spacingAndGlyphs">Secondary</text>
<text x="772" y="257.3" font-family="Liberation Sans" font-size="12" fill="#2e5e0e" font-weight="bold" textLength="90" lengthAdjust="spacingAndGlyphs">Quality of the fit</text>
<text x="875.6" y="256.9" font-family="Liberation Sans" font-size="12" fill="#000" textLength="120.4" lengthAdjust="spacingAndGlyphs">No reliable position or size</text>
<text x="891.9" y="278.75" font-family="Liberation Sans" font-size="12" fill="#000" font-style="italic" textLength="98.7" lengthAdjust="spacingAndGlyphs">Flag for future review</text>
<text x="774.3" y="313.6" font-family="Liberation Sans" font-size="12" fill="#78142a" font-weight="bold" text-anchor="middle">P</text>
<text x="774.3" y="327.5" font-family="Liberation Sans" font-size="12" fill="#78142a" font-weight="bold" text-anchor="middle">L</text>
<text x="774.3" y="340.4" font-family="Liberation Sans" font-size="12" fill="#78142a" font-weight="bold" text-anchor="middle">O</text>
<text x="774.3" y="353" font-family="Liberation Sans" font-size="12" fill="#78142a" font-weight="bold" text-anchor="middle">T</text>
<text x="790.4" y="310" font-family="Liberation Sans" font-size="12" fill="#701838" font-weight="bold" textLength="31" lengthAdjust="spacingAndGlyphs">Scale</text>
<text x="790" y="335.6" font-family="Liberation Sans" font-size="12" fill="#701838" font-weight="bold" textLength="23.7" lengthAdjust="spacingAndGlyphs">Size</text>
<text x="849" y="336.8" font-family="Liberation Sans" font-size="12" fill="#701838" font-weight="bold" textLength="36" lengthAdjust="spacingAndGlyphs">normal</text>
<text x="913" y="336.8" font-family="Liberation Sans" font-size="12" fill="#701838" font-weight="bold" textLength="17" lengthAdjust="spacingAndGlyphs">x 2</text>
<text x="956" y="336.8" font-family="Liberation Sans" font-size="12" fill="#701838" font-weight="bold" textLength="18" lengthAdjust="spacingAndGlyphs">x 5</text>
<text x="1005.6" y="336.4" font-family="Liberation Sans" font-size="12" fill="#7a0a8a" font-weight="bold" textLength="71.4" lengthAdjust="spacingAndGlyphs">Form opacity</text>
<text x="791.7" y="361.4" font-family="Liberation Sans" font-size="12" fill="#701838" font-weight="bold" textLength="102.4" lengthAdjust="spacingAndGlyphs">Scroll range x1.25</text>
<text x="776.7" y="390.3" font-family="Liberation Sans" font-size="12" fill="#000" textLength="98" lengthAdjust="spacingAndGlyphs">RMS fit 54.9 ±5.4 km</text>
</svg>
</body></html>
